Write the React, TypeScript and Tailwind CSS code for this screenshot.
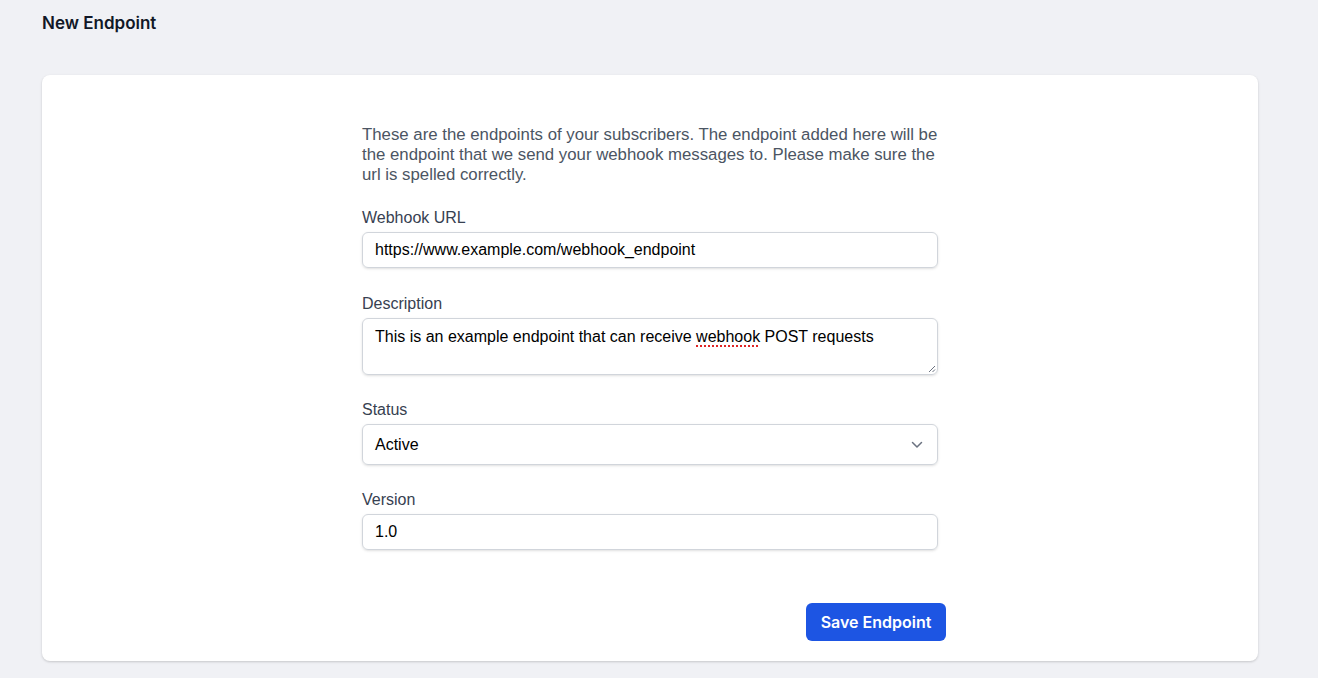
import React from "react";

export default function App() {
  return (
    <div className="min-h-[678px] w-full bg-[#f0f1f5] pl-[42px] pr-[60px] pb-4" style={{ fontFamily: '"Liberation Sans", Arial, sans-serif' }}>
      <div className="flex h-[75px] items-start pt-[12px]">
        <h1 className="text-[17px] font-semibold leading-[22px] text-[#111827]" style={{ fontFamily: 'Inter, "Liberation Sans", sans-serif' }}>New Endpoint</h1>
      </div>
      <div className="rounded-lg bg-white pt-[50px] pb-[20px] shadow-[0_1px_3px_rgba(0,0,0,0.12),0_1px_2px_rgba(0,0,0,0.06)]">
        <div className="mx-auto w-[576px]">
          <p className="text-[16.8px] leading-5 text-[#4b5563]">
            These are the endpoints of your subscribers. The endpoint added here will be the endpoint that we send your webhook messages to. Please make sure the url is spelled correctly.
          </p>
          <div className="mt-[23px]">
            <label className="block text-[16px] leading-5 text-[#374151]">Webhook URL</label>
            <div className="mt-1 flex h-9 items-center rounded-md border border-[#d1d5db] px-3 text-[16px] text-black shadow-sm">
              https://www.example.com/webhook_endpoint
            </div>
          </div>
          <div className="mt-[26px]">
            <label className="block text-[16px] leading-5 text-[#374151]">Description</label>
            <div className="relative mt-1 h-[57px] rounded-md border border-[#d1d5db] px-3 pt-[8px] text-[16px] leading-5 text-black shadow-sm">
              This is an example endpoint that can receive{" "}
              <span className="underline decoration-dotted decoration-[#e02424] decoration-2 underline-offset-[3px]">webhook</span> POST requests
              <svg className="absolute right-[1px] bottom-[1px]" width="8" height="8" viewBox="0 0 8 8">
                <path d="M7 1L1 7M7 4.5L4.5 7" stroke="#6b7280" strokeWidth="1" />
              </svg>
            </div>
          </div>
          <div className="mt-[25px]">
            <label className="block text-[16px] leading-5 text-[#374151]">Status</label>
            <div className="mt-1 flex h-[41px] items-center justify-between rounded-md border border-[#d1d5db] pl-3 pr-3 text-[16px] text-black shadow-sm">
              <span>Active</span>
              <svg width="12" height="8" viewBox="0 0 12 8" className="mr-[2px]">
                <path d="M1.5 1.5L6 6L10.5 1.5" fill="none" stroke="#6b7280" strokeWidth="1.5" strokeLinecap="round" strokeLinejoin="round" />
              </svg>
            </div>
          </div>
          <div className="mt-[25px]">
            <label className="block text-[16px] leading-5 text-[#374151]">Version</label>
            <div className="mt-1 flex h-9 items-center rounded-md border border-[#d1d5db] px-3 text-[16px] text-black shadow-sm">
              1.0
            </div>
          </div>
          <div className="mt-[53px] flex justify-end">
            <button className="-mr-2 h-[38px] w-[140px] rounded-md bg-[#1d55e3] text-[16px] font-semibold text-white" style={{ fontFamily: 'Inter, "Liberation Sans", sans-serif' }}>
              Save Endpoint
            </button>
          </div>
        </div>
      </div>
    </div>
  );
}
